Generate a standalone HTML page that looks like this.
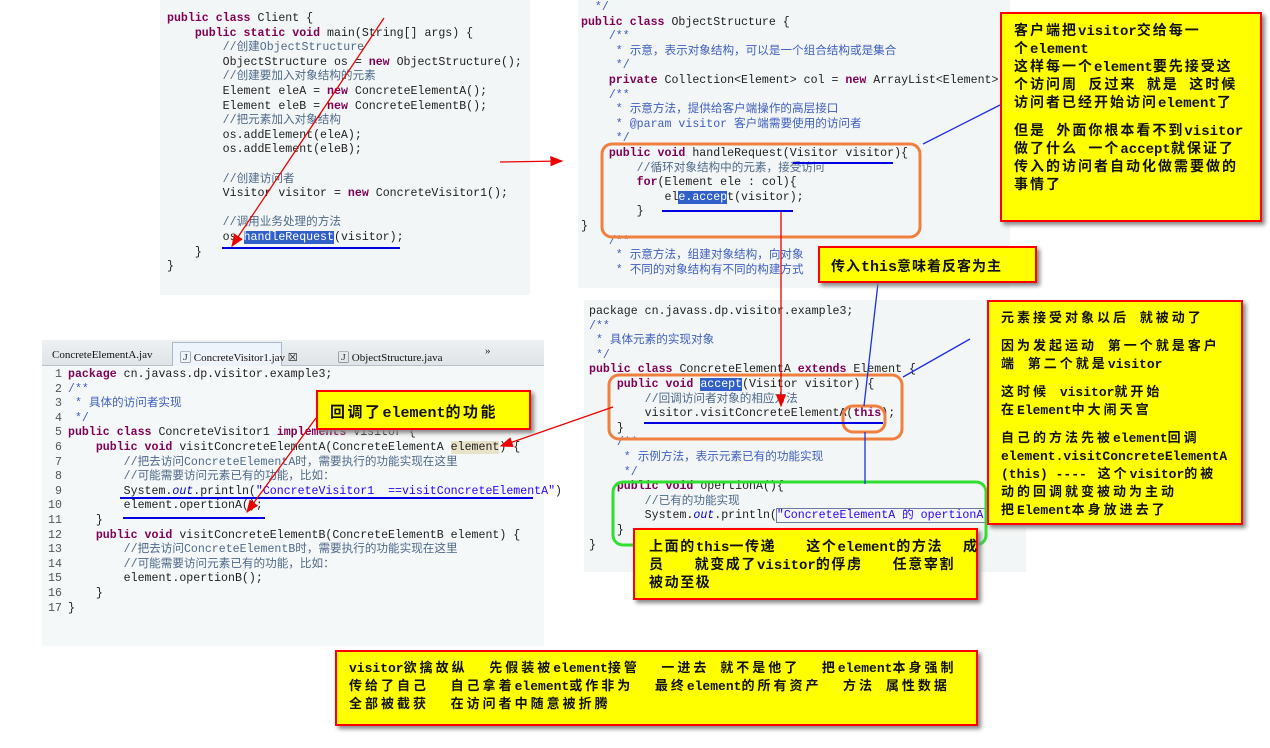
<!DOCTYPE html>
<html><head><meta charset="utf-8">
<style>
*{margin:0;padding:0;box-sizing:border-box}
body{width:1270px;height:748px;background:#fff;position:relative;overflow:hidden;font-family:"Liberation Mono","Noto Sans CJK SC",monospace}
.panel{position:absolute;background:#f3f6f6}
pre{position:absolute;font-family:"Liberation Mono","Noto Sans CJK SC",monospace;font-size:11.6px;line-height:14.6px;color:#1e1e1e;white-space:pre}
.k{color:#7f0055;font-weight:bold}
.c{color:#4f6a8a}
.j{color:#3f5fbf}
.s{color:#2a00ff}
.h{background:#3060c8;color:#fff}
.y{position:absolute;background:#ffff00;border:2px solid #ff0000;box-shadow:3px 3px 4px #888;font-family:"Liberation Mono","Noto Sans CJK SC",monospace;font-weight:bold;color:#111}
.y p{white-space:nowrap}
.l{letter-spacing:0;font-weight:bold}
.tab{position:absolute;font-family:"Liberation Serif","Noto Serif CJK SC",serif;font-size:11px;color:#111}
svg{position:absolute;left:0;top:0}
</style></head><body>

<div class="panel" style="left:160px;top:0;width:370px;height:295px"></div>
<div class="panel" style="left:578px;top:0;width:432px;height:288px"></div>
<div class="panel" style="left:42px;top:340px;width:502px;height:306px;background:#f5f8f8"></div>
<div class="panel" style="left:584px;top:300px;width:442px;height:272px"></div>

<pre style="left:167px;top:12px"><span class="k">public class</span> Client {
    <span class="k">public static void</span> main(String[] args) {
        <span class="c">//创建ObjectStructure</span>
        ObjectStructure os = <span class="k">new</span> ObjectStructure();
        <span class="c">//创建要加入对象结构的元素</span>
        Element eleA = <span class="k">new</span> ConcreteElementA();
        Element eleB = <span class="k">new</span> ConcreteElementB();
        <span class="c">//把元素加入对象结构</span>
        os.addElement(eleA);
        os.addElement(eleB);

        <span class="c">//创建访问者</span>
        Visitor visitor = <span class="k">new</span> ConcreteVisitor1();

        <span class="c">//调用业务处理的方法</span>
        os.<span class="h">handleRequest</span>(visitor);
    }
}</pre>

<pre style="left:581px;top:1px"><span class="j">  */</span>
<span class="k">public class</span> ObjectStructure {
    <span class="j">/**</span>
<span class="j">     * 示意，表示对象结构，可以是一个组合结构或是集合</span>
<span class="j">     */</span>
    <span class="k">private</span> Collection&lt;Element&gt; col = <span class="k">new</span> ArrayList&lt;Element&gt;(
    <span class="j">/**</span>
<span class="j">     * 示意方法，提供给客户端操作的高层接口</span>
<span class="j">     * @param visitor 客户端需要使用的访问者</span>
<span class="j">     */</span>
    <span class="k">public void</span> handleRequest(Visitor visitor){
        <span class="c">//循环对象结构中的元素，接受访问</span>
        <span class="k">for</span>(Element ele : col){
            el<span class="h">e.accep</span>t(visitor);
        }
}
    <span class="j">/**</span>
<span class="j">     * 示意方法，组建对象结构，向对象</span>
<span class="j">     * 不同的对象结构有不同的构建方式</span></pre>

<div style="position:absolute;left:42px;top:340px;width:502px;height:26px;background:linear-gradient(#eef1f3,#dfe4e8);border-bottom:1px solid #b8c0c8"></div>
<div style="position:absolute;left:172px;top:342px;width:110px;height:24px;background:#eef4fb;border:1px solid #aab8c8;border-bottom:none"></div>
<div class="tab" style="left:52px;top:349px">ConcreteElementA.jav</div>
<div class="tab" style="left:180px;top:349px">🄹 ConcreteVisitor1.jav ☒</div>
<div class="tab" style="left:338px;top:349px">🄹 ObjectStructure.java</div>
<div class="tab" style="left:485px;top:345px">»</div>

<pre style="left:48px;top:368px;color:#555"> 1
 2
 3
 4
 5
 6
 7
 8
 9
10
11
12
13
14
15
16
17</pre>
<pre style="left:68px;top:368px"><span class="k">package</span> cn.javass.dp.visitor.example3;
<span class="j">/**</span>
<span class="j"> * 具体的访问者实现</span>
<span class="j"> */</span>
<span class="k">public class</span> ConcreteVisitor1 <span class="k">implements</span> Visitor {
    <span class="k">public void</span> visitConcreteElementA(ConcreteElementA <span style="background:#e8e2c8">element</span>) {
        <span class="c">//把去访问ConcreteElementA时，需要执行的功能实现在这里</span>
        <span class="c">//可能需要访问元素已有的功能，比如：</span>
        System.<i style="color:#0000c0">out</i>.println(<span class="s">"ConcreteVisitor1  ==visitConcreteElementA"</span>)
        element.opertionA();
    }
    <span class="k">public void</span> visitConcreteElementB(ConcreteElementB element) {
        <span class="c">//把去访问ConcreteElementB时，需要执行的功能实现在这里</span>
        <span class="c">//可能需要访问元素已有的功能，比如：</span>
        element.opertionB();
    }
}</pre>

<pre style="left:589px;top:305px">package cn.javass.dp.visitor.example3;
<span class="j">/**</span>
<span class="j"> * 具体元素的实现对象</span>
<span class="j"> */</span>
<span class="k">public class</span> ConcreteElementA <span class="k">extends</span> Element {
    <span class="k">public void</span> <span class="h">accept</span>(Visitor visitor) {
        <span class="c">//回调访问者对象的相应方法</span>
        visitor.visitConcreteElementA(<span class="k">this</span>);
    }
    <span class="j">/**</span>
<span class="j">     * 示例方法，表示元素已有的功能实现</span>
<span class="j">     */</span>
    <span class="k">public void</span> opertionA(){
        <span class="c">//已有的功能实现</span>
        System.<i style="color:#0000c0">out</i>.println(<span class="s" style="outline:1px solid #6a7aa0">"ConcreteElementA 的 opertionA"</span>
    }
}</pre>

<svg width="1270" height="748">
<defs><marker id="ar" markerWidth="10" markerHeight="8" refX="9" refY="4" orient="auto"><path d="M0,0 L10,4 L0,8 z" fill="#e00"/></marker></defs>
<g fill="none">
<rect x="602" y="144" width="318" height="93" rx="10" stroke="#f08040" stroke-width="3"/>
<rect x="609" y="375" width="293" height="64" rx="10" stroke="#f08040" stroke-width="3"/>
<rect x="843" y="406" width="42" height="26" rx="10" stroke="#f08040" stroke-width="3"/>
<rect x="613" y="482" width="373" height="63" rx="10" stroke="#30e030" stroke-width="3"/>
<g stroke="#0000e0" stroke-width="2">
<line x1="222" y1="248" x2="400" y2="248"/>
<line x1="793" y1="163" x2="893" y2="163"/>
<line x1="662" y1="211" x2="793" y2="211"/>
<line x1="120" y1="498" x2="533" y2="498"/>
<line x1="123" y1="518" x2="265" y2="518"/>
<line x1="644" y1="423" x2="883" y2="423"/>
</g>
<g stroke="#2030e0" stroke-width="1.3">
<line x1="923" y1="144" x2="1000" y2="105"/>
<line x1="878" y1="283" x2="864" y2="406"/>
<line x1="865" y1="432" x2="865" y2="484"/>
<line x1="903" y1="377" x2="970" y2="339"/>
</g>
<g stroke="#e00" stroke-width="1.3" marker-end="url(#ar)">
<line x1="384" y1="18" x2="232" y2="246"/>
<line x1="500" y1="162" x2="562" y2="161"/>
<line x1="781" y1="212" x2="781" y2="406"/>
<line x1="316" y1="418" x2="247" y2="512"/>
<line x1="613" y1="407" x2="501" y2="446"/>
</g>
</g>
</svg>

<div class="y" style="left:1000px;top:12px;width:262px;height:210px;padding:9px 0 0 12px;font-size:14px;line-height:18px;letter-spacing:2px">
<p>客户端把<b class="l">visitor</b>交给每一</p><p>个<b class="l">element</b></p><p>这样每一个<b class="l">element</b>要先接受这</p><p>个访问周 反过来 就是 这时候</p><p>访问者已经开始访问<b class="l">element</b>了</p>
<p style="margin-top:10px">但是 外面你根本看不到<b class="l">visitor</b></p><p>做了什么 一个<b class="l">accept</b>就保证了</p><p>传入的访问者自动化做需要做的</p><p>事情了</p></div>

<div class="y" style="left:818px;top:246px;width:219px;height:37px;padding:8px 0 0 11px;font-size:14px;letter-spacing:1px">传入<b class="l" style="font-size:15px">this</b>意味着反客为主</div>

<div class="y" style="left:987px;top:300px;width:256px;height:225px;padding:8px 0 0 12px;font-size:13px;line-height:18px;letter-spacing:3px">
<p>元素接受对象以后 就被动了</p>
<p style="margin-top:10px">因为发起运动 第一个就是客户</p><p>端 第二个就是<b class="l">visitor</b></p>
<p style="margin-top:10px">这时候 <b class="l">visitor</b>就开始</p><p>在<b class="l">Element</b>中大闹天宫</p>
<p style="margin-top:10px">自己的方法先被<b class="l">element</b>回调</p><p><b class="l">element.visitConcreteElementA</b></p><p><b class="l">(this) ----</b> 这个<b class="l">visitor</b>的被</p><p>动的回调就变被动为主动</p><p>把<b class="l">Element</b>本身放进去了</p></div>

<div class="y" style="left:316px;top:390px;width:215px;height:40px;padding:9px 0 0 12px;font-size:15px;letter-spacing:2.5px">回调了<b class="l">element</b>的功能</div>

<div class="y" style="left:633px;top:528px;width:345px;height:72px;padding:9px 0 0 14px;font-size:14px;line-height:18px;letter-spacing:1.6px">
<p>上面的<b class="l">this</b>一传递&nbsp;&nbsp; 这个<b class="l">element</b>的方法&nbsp; 成</p><p>员&nbsp;&nbsp; 就变成了<b class="l">visitor</b>的俘虏&nbsp;&nbsp; 任意宰割</p><p>被动至极</p></div>

<div class="y" style="left:335px;top:650px;width:643px;height:76px;padding:8px 0 0 12px;font-size:13px;line-height:18px;letter-spacing:3px">
<p><b class="l">visitor</b>欲擒故纵&nbsp; 先假装被<b class="l">element</b>接管&nbsp; 一进去 就不是他了&nbsp; 把<b class="l">element</b>本身强制</p><p>传给了自己&nbsp; 自己拿着<b class="l">element</b>或作非为&nbsp; 最终<b class="l">element</b>的所有资产&nbsp; 方法&nbsp;属性数据</p><p>全部被截获&nbsp; 在访问者中随意被折腾</p></div>

</body></html>
